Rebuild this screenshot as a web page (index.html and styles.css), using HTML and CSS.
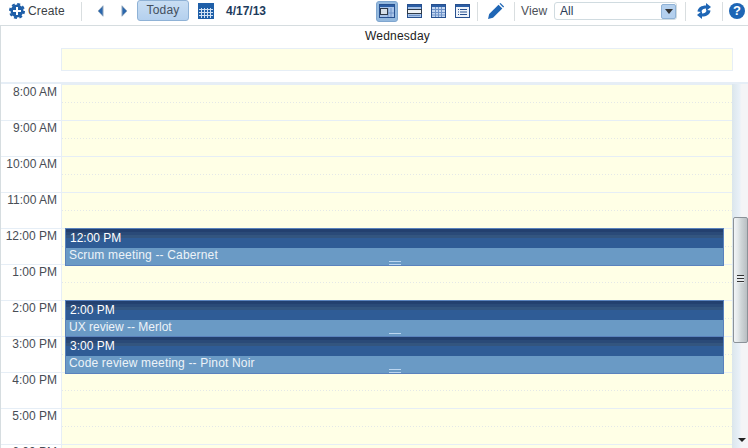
FILE: index.html
```html
<!DOCTYPE html>
<html lang="en">
<head>
<meta charset="utf-8">
<title>Calendar</title>
<link rel="stylesheet" href="styles.css">
</head>
<body>
<div class="toolbar">
  <svg class="ic-create" width="16" height="16" viewBox="0 0 16 16"><circle cx="8" cy="8" r="6.500" fill="#1f5fa8"/><circle cx="8" cy="8" r="7" fill="none" stroke="#1f5fa8" stroke-width="2" stroke-dasharray="3 2.500"/><path fill="#fff" d="M7 4h2v3h3v2H9v3H7V9H4V7h3z"/></svg>
  <span class="create">Create</span>
  <span class="sep sep-a"></span>
  <svg class="ic-prev" width="7" height="12" viewBox="0 0 7 12"><path fill="#2b67ad" stroke="#8fa5bd" d="M6 .8v10.400L1 6z"/></svg>
  <svg class="ic-next" width="7" height="12" viewBox="0 0 7 12"><path fill="#2b67ad" stroke="#8fa5bd" d="M1 .8v10.400L6 6z"/></svg>
  <span class="today">Today</span>
  <svg class="ic-cal" width="16" height="16" viewBox="0 0 16 16"><rect width="16" height="16" fill="#1f5fa8"/><path stroke="#cfe0f3" d="M3.500 5v10M6.500 5v10M9.500 5v10M12.500 5v10M1 6.500h14M1 9.500h14M1 12.500h14"/></svg>
  <span class="date">4/17/13</span>
  <span class="views">
    <span class="view view-on"><svg width="16" height="14" viewBox="0 0 16 14"><rect x=".5" y=".5" width="15" height="13" fill="#a9c4e8" stroke="#27508f"/><rect x="1" y="1" width="14" height="2" fill="#2b5ea5"/><path stroke="#6f93c8" d="M9 4v9M12 4v9M6 9h9"/><rect x="1.500" y="4.500" width="7" height="6" fill="#d6dfe8" stroke="#2f3a48"/></svg></span>
    <span class="view"><svg width="15" height="14" viewBox="0 0 15 14"><rect x=".5" y=".5" width="14" height="13" fill="#a9c4e8" stroke="#27508f"/><rect x="1" y="1" width="13" height="2" fill="#2b5ea5"/><rect x=".5" y="5.500" width="14" height="4" fill="#eef2f6" stroke="#2f3a48"/><path stroke="#6f93c8" d="M2 11.500h11"/></svg></span>
    <span class="view"><svg width="15" height="14" viewBox="0 0 15 14"><rect x=".5" y=".5" width="14" height="13" fill="#c5d7f0" stroke="#27508f"/><rect x="1" y="1" width="13" height="2" fill="#2b5ea5"/><path stroke="#6f93c8" d="M4.500 3v10M7.500 3v10M10.500 3v10M1 5.500h13M1 8.500h13M1 11h13"/></svg></span>
    <span class="view"><svg width="15" height="14" viewBox="0 0 15 14"><rect x=".5" y=".5" width="14" height="13" fill="#eef3fa" stroke="#27508f"/><rect x="1" y="1" width="13" height="2" fill="#2b5ea5"/><path stroke="#27508f" d="M3 5.500h1M5 5.500h7M3 8h1M5 8h7M3 10.500h1M5 10.500h7"/></svg></span>
  </span>
  <span class="sep sep-b"></span>
  <svg class="ic-pencil" width="16" height="16" viewBox="0 0 16 16"><path fill="#1f66b5" d="M0 16l1.200-5L10.500 1.700l3.800 3.800L5 14.800z"/><path fill="#1f66b5" d="M11.500.8l1-.8 3.600 3.600-.9 1z"/></svg>
  <span class="sep sep-c"></span>
  <span class="view-label">View</span>
  <span class="select"><span class="select-val">All</span><span class="select-btn"><i class="caret"></i></span></span>
  <span class="sep sep-d"></span>
  <svg class="ic-refresh" width="14" height="16" viewBox="0 0 14 16"><path fill="#1f66b5" d="M9 0l5 4-5 4V5.500C6.500 5.500 5 6.500 4 9L.5 8.500C1 4.500 4.500 2.500 9 2.500z"/><path fill="#1f66b5" d="M5 16l-5-4 5-4v2.500C7.500 10.500 9 9.500 10 7l3.500.5C13 11.500 9.500 13.500 5 13.500z"/></svg>
  <span class="sep sep-e"></span>
  <span class="help">?</span>
</div>

<div class="calendar">
  <div class="head">
    <div class="day-name">Wednesday</div>
    <div class="allday"></div>
  </div>
  <div class="body">
    <div class="hours">
      <div class="hour"><span class="label">8:00 AM</span><span class="slot"></span></div>
      <div class="hour"><span class="label">9:00 AM</span><span class="slot"></span></div>
      <div class="hour"><span class="label">10:00 AM</span><span class="slot"></span></div>
      <div class="hour"><span class="label">11:00 AM</span><span class="slot"></span></div>
      <div class="hour"><span class="label">12:00 PM</span><span class="slot"></span></div>
      <div class="hour"><span class="label">1:00 PM</span><span class="slot"></span></div>
      <div class="hour"><span class="label">2:00 PM</span><span class="slot"></span></div>
      <div class="hour"><span class="label">3:00 PM</span><span class="slot"></span></div>
      <div class="hour"><span class="label">4:00 PM</span><span class="slot"></span></div>
      <div class="hour"><span class="label">5:00 PM</span><span class="slot"></span></div>
      <div class="hour"><span class="label">6:00 PM</span><span class="slot"></span></div>
    </div>
    <div class="event ev-a"><div class="ev-time">12:00 PM</div><div class="ev-title">Scrum meeting -- Cabernet</div><i class="grip"></i></div>
    <div class="event ev-b"><div class="ev-time">2:00 PM</div><div class="ev-title ev-short">UX review -- Merlot</div><i class="grip"></i></div>
    <div class="event ev-c"><div class="ev-time">3:00 PM</div><div class="ev-title">Code review meeting -- Pinot Noir</div><i class="grip"></i></div>
    <div class="scrollbar"><div class="thumb"><i class="thumb-grip"></i></div><i class="arrow"></i></div>
  </div>
</div>
</body>
</html>
```
FILE: styles.css
```css
html, body { margin: 0; padding: 0; }
body {
  width: 748px;
  height: 448px;
  overflow: hidden;
  background: #fff;
  font-family: "Liberation Sans", Arial, sans-serif;
  font-size: 12px;
  color: #3c3f45;
}
.toolbar {
  display: flex;
  align-items: center;
  height: 26px;
  padding-bottom: 3px;
  box-sizing: border-box;
  border-bottom: 1px solid #d6dde0;
}
.toolbar svg { display: block; flex: none; }
.ic-create { margin-left: 9px; }
.create { margin-left: 3px; width: 37px; letter-spacing: .15px; }
.sep { width: 1px; height: 19px; background: #d9dee0; flex: none; }
.sep-a { margin-left: 16px; }
.ic-prev { margin-left: 15px; }
.ic-next { margin-left: 17px; }
.today {
  margin-left: 9px;
  width: 52px;
  height: 21px;
  margin-top: -1px;
  box-sizing: border-box;
  line-height: 18px;
  text-align: center;
  letter-spacing: .15px;
  border: 1px solid #8fb2d6;
  border-radius: 3px;
  background: linear-gradient(#c9def3, #b4d0ee);
  color: #44505e;
}
.ic-cal { margin-left: 9px; }
.date { margin-left: 12px; width: 41px; font-weight: bold; color: #1d3b5c; white-space: nowrap; }
.views { display: flex; align-items: center; margin-left: 109px; width: 92px; }
.view { display: flex; align-items: center; justify-content: center; width: 24px; height: 21px; flex: none; }
.view-on {
  width: 22px;
  box-sizing: border-box;
  border: 1px solid #7fa6cf;
  border-radius: 3px;
  background: #94b9de;
  margin-right: 4px;
}
.sep-b { margin-left: 9px; }
.ic-pencil { margin-left: 10px; }
.sep-c { margin-left: 10px; }
.view-label { margin-left: 6px; width: 27px; color: #4b5058; letter-spacing: .15px; }
.select {
  display: flex;
  align-items: center;
  justify-content: space-between;
  margin-left: 6px;
  width: 123px;
  height: 18px;
  box-sizing: border-box;
  border: 1px solid #d0dbe0;
  border-radius: 3px;
  padding-left: 5px;
}
.select-val { color: #2a3a55; }
.select-btn {
  display: flex;
  align-items: center;
  justify-content: center;
  width: 15px;
  height: 15px;
  box-sizing: border-box;
  border: 1px solid #8fb2d6;
  border-radius: 2px;
  background: #b4d0ee;
}
.caret { width: 0; height: 0; border: 4px solid transparent; border-top: 5px solid #333; border-bottom: 0; }
.sep-d { margin-left: 8px; }
.ic-refresh { margin-left: 11px; }
.sep-e { margin-left: 11px; }
.help {
  margin-left: 6px;
  width: 16px;
  height: 16px;
  line-height: 16px;
  border-radius: 50%;
  background: #1f66b5;
  color: #fff;
  font-weight: bold;
  font-size: 13px;
  text-align: center;
  flex: none;
}
.calendar { border-left: 1px solid #d6dde0; }
.head { height: 56px; display: flex; flex-direction: column; border-bottom: 2px solid #e6eef6; }
.day-name { height: 22px; line-height: 20px; width: 671px; margin-left: 61px; text-align: center; color: #222; letter-spacing: .2px; }
.allday {
  margin-left: 60px;
  width: 672px;
  height: 23px;
  box-sizing: border-box;
  background: #ffffe6;
  border: 1px solid #e6eef6;
}
.body { position: relative; height: 364px; overflow: hidden; }
.hour { display: flex; height: 36px; }
.label {
  width: 56px;
  padding-right: 4px;
  text-align: right;
  line-height: 15px;
  color: #484d55;
  border-top: 1px solid transparent;
  flex: none;
}
.hour + .hour .label { border-top-color: #e6eef6; }
.slot {
  width: 671px;
  box-sizing: border-box;
  flex: none;
  border-left: 1px solid #e6eef6;
  background:
    linear-gradient(#e6eef6, #e6eef6) 0 0 / 100% 1px no-repeat,
    repeating-linear-gradient(90deg, #e4e8e8 0 1px, transparent 1px 3px) 0 18px / 100% 1px no-repeat,
    #ffffe6;
}
.event {
  position: absolute;
  left: 64px;
  width: 659px;
  height: 38px;
  box-sizing: border-box;
  border: 1px solid #5a82bd;
  background: #6a9ac5;
  color: #fff;
}
.ev-a { top: 144px; }
.ev-b { top: 216px; }
.ev-c { top: 252px; }
.ev-time {
  height: 19px;
  line-height: 18px;
  padding-left: 4px;
  background: linear-gradient(#23406f 0 16%, #2a4a78 16% 32%, #33557f 32% 48%, #2f5c96 48% 100%);
}
.ev-title { height: 17px; line-height: 14px; padding-left: 3px; color: #edf3f8; letter-spacing: .17px; }
.ev-short { letter-spacing: 0; }
.grip {
  position: absolute;
  left: 323px;
  bottom: 0;
  width: 12px;
  height: 4px;
  border-top: 1px solid #bcd6f0;
  border-bottom: 1px solid #bcd6f0;
  box-sizing: border-box;
}
.scrollbar {
  position: absolute;
  left: 731px;
  top: 0;
  width: 16px;
  height: 364px;
  background: linear-gradient(90deg, #dbe6ec 0, #e8f0f7 45%, #f4f4f6 60%, #f4f4f6 100%);
}
.thumb {
  position: absolute;
  left: 1px;
  top: 133px;
  width: 15px;
  height: 126px;
  box-sizing: border-box;
  border: 1px solid #8b9298;
  border-radius: 2px;
  background: linear-gradient(90deg, #f2f5f7 0, #e3e8ea 30%, #cfd6d8 55%, #b9bec2 100%);
}
.thumb-grip {
  position: absolute;
  left: 3px;
  top: 57px;
  width: 7px;
  height: 8px;
  background: repeating-linear-gradient(#333 0 1px, #e8ecef 1px 3px);
}
.arrow {
  position: absolute;
  left: 6px;
  bottom: 6px;
  width: 0;
  height: 0;
  border: 4px solid transparent;
  border-top: 4px solid #222;
  border-bottom: 0;
}
```
